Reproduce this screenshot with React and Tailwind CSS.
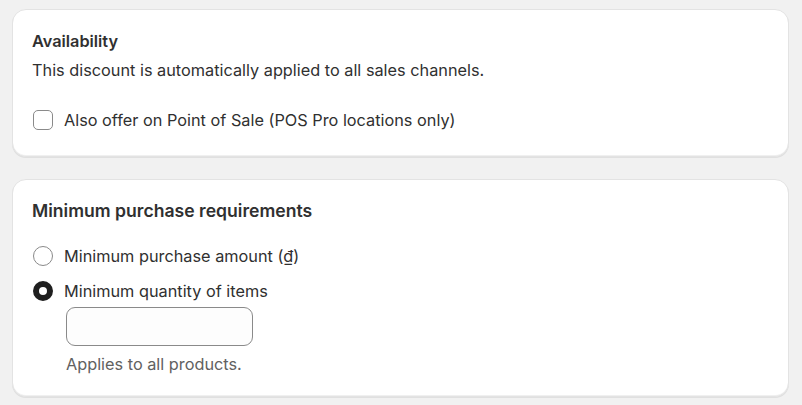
import React, { useState } from "react";

const card =
  "w-[777px] ml-3 bg-white rounded-[14px] border border-[#e3e3e3] shadow-[0_1px_0_0_rgba(26,26,26,0.08),inset_0_-1px_0_0_rgba(0,0,0,0.06)] pl-[19px] pr-5";

export default function App() {
  const [pos, setPos] = useState(false);
  const [req, setReq] = useState("qty");

  return (
    <div
      className="w-[802px] h-[405px] bg-[#f1f1f1] pt-[9px] overflow-hidden text-[#303030]"
      style={{ fontFamily: "Inter, 'Noto Sans', 'Liberation Sans', sans-serif" }}
    >
      {/* Availability */}
      <div className={`${card} h-[148px] pt-[19px]`}>
        <h2 className="text-[16.3px] leading-6 font-semibold">Availability</h2>
        <p className="mt-[5px] text-[16.3px] leading-6">
          This discount is automatically applied to all sales channels.
        </p>
        <label className="mt-[26px] flex items-center gap-[11px] text-[16.3px] leading-6 cursor-pointer">
          <span
            onClick={() => setPos(!pos)}
            className={`ml-px w-5 h-5 rounded-[5px] border ${
              pos ? "bg-[#303030] border-[#303030]" : "border-[#8a8a8a] bg-white"
            }`}
          />
          <span>Also offer on Point of Sale (POS Pro locations only)</span>
        </label>
      </div>

      {/* Minimum purchase requirements */}
      <div className={`${card} mt-[22px] h-[218px] pt-[18px]`}>
        <h2 className="text-[17.6px] leading-[26px] font-semibold">Minimum purchase requirements</h2>
        <div className="mt-5 flex flex-col gap-[11px]">
          {[
            { id: "amount", label: "Minimum purchase amount (₫)" },
            { id: "qty", label: "Minimum quantity of items" },
          ].map((o) => (
            <label
              key={o.id}
              onClick={() => setReq(o.id)}
              className="flex items-center gap-[11px] text-[16.3px] leading-6 cursor-pointer"
            >
              <span
                className={`ml-px w-5 h-5 rounded-full bg-white ${
                  req === o.id ? "border-[6px] border-[#1f1f1f]" : "border border-[#8a8a8a]"
                }`}
              />
              <span>{o.label}</span>
            </label>
          ))}
        </div>
        <div className="ml-[34px] mt-1">
          <input
            type="text"
            className="w-[187px] h-[39px] rounded-[9px] border border-[#8a8a8a] bg-[#fdfdfd] px-3 outline-none"
          />
          <p className="mt-[6px] text-[16.3px] leading-6 text-[#616161]">Applies to all products.</p>
        </div>
      </div>
    </div>
  );
}
